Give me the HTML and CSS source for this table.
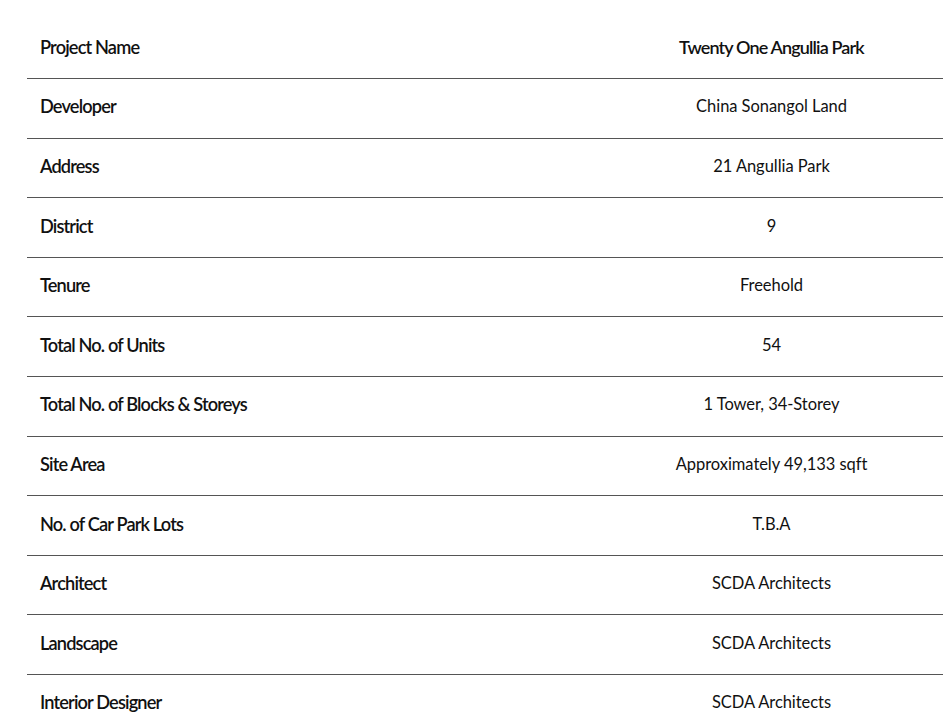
FILE: index.html
```html
<!DOCTYPE html>
<html>
<head>
<meta charset="utf-8">
<link rel="stylesheet" href="styles.css">
</head>
<body>
<table class="specs">
  <tr><th>Project Name</th><td class="strong">Twenty One Angullia Park</td></tr>
  <tr><th>Developer</th><td>China Sonangol Land</td></tr>
  <tr><th>Address</th><td>21 Angullia Park</td></tr>
  <tr><th>District</th><td>9</td></tr>
  <tr><th>Tenure</th><td>Freehold</td></tr>
  <tr><th>Total No. of Units</th><td>54</td></tr>
  <tr><th>Total No. of Blocks &amp; Storeys</th><td>1 Tower, 34-Storey</td></tr>
  <tr><th>Site Area</th><td>Approximately 49,133 sqft</td></tr>
  <tr><th>No. of Car Park Lots</th><td>T.B.A</td></tr>
  <tr><th>Architect</th><td>SCDA Architects</td></tr>
  <tr><th>Landscape</th><td>SCDA Architects</td></tr>
  <tr><th>Interior Designer</th><td>SCDA Architects</td></tr>
</table>
</body>
</html>
```
FILE: styles.css
```css
html, body {
  margin: 0;
  padding: 0;
  background: #fff;
  overflow: hidden;
}
body {
  padding: 19px 0 0 27px;
  font-family: Lato, "Open Sans", sans-serif;
  color: #111;
}
.specs {
  width: 916px;
  border-collapse: collapse;
  table-layout: fixed;
}
.specs tr {
  height: 59.6px;
  border-bottom: 1.5px solid #555;
}
.specs th {
  text-align: left;
  padding: 0 0 4px 13px;
  font-weight: 600;
  font-size: 18.2px;
  letter-spacing: -0.85px;
  vertical-align: middle;
}
.specs td {
  width: 343px;
  text-align: center;
  padding: 0 0 4px 0;
  font-size: 16.5px;
  font-weight: 400;
  letter-spacing: -0.05px;
  vertical-align: middle;
}
.specs td.strong {
  font-weight: 600;
  font-size: 18px;
  letter-spacing: -0.85px;
}
```
